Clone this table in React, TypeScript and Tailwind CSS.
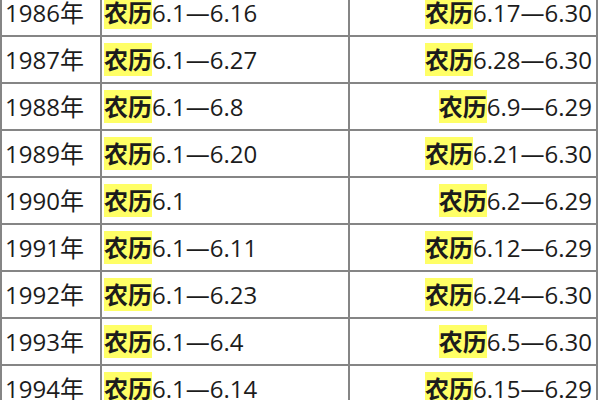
const ROWS: { year: string; a: string; b: string }[] = [
  { year: '1986', a: '6.1—6.16', b: '6.17—6.30' },
  { year: '1987', a: '6.1—6.27', b: '6.28—6.30' },
  { year: '1988', a: '6.1—6.8', b: '6.9—6.29' },
  { year: '1989', a: '6.1—6.20', b: '6.21—6.30' },
  { year: '1990', a: '6.1', b: '6.2—6.29' },
  { year: '1991', a: '6.1—6.11', b: '6.12—6.29' },
  { year: '1992', a: '6.1—6.23', b: '6.24—6.30' },
  { year: '1993', a: '6.1—6.4', b: '6.5—6.30' },
  { year: '1994', a: '6.1—6.14', b: '6.15—6.29' },
]

function Lunar({ range }: { range: string }) {
  return (
    <>
      <span className="bg-[#ffff66] font-bold">农历</span>
      {range}
    </>
  )
}

export default function App() {
  return (
    <div className="w-[600px] h-[400px] overflow-hidden bg-white">
      <table
        className="-mt-[12px] w-[598px] table-fixed border-collapse text-[24px] text-[#1c1c1c]"
        style={{ fontFamily: '"Open Sans", "Noto Sans CJK SC", sans-serif' }}
      >
        <colgroup>
          <col className="w-[100px]" />
          <col className="w-[248px]" />
          <col className="w-[248px]" />
        </colgroup>
        <tbody>
          {ROWS.map(r => (
            <tr key={r.year} className="h-[47px]">
              <td className="border-2 border-[#858585] pl-[3px] whitespace-nowrap">{r.year}年</td>
              <td className="border-2 border-[#858585] pl-[2px] whitespace-nowrap">
                <Lunar range={r.a} />
              </td>
              <td className="border-2 border-[#858585] pr-[4px] text-right whitespace-nowrap">
                <Lunar range={r.b} />
              </td>
            </tr>
          ))}
        </tbody>
      </table>
    </div>
  )
}
